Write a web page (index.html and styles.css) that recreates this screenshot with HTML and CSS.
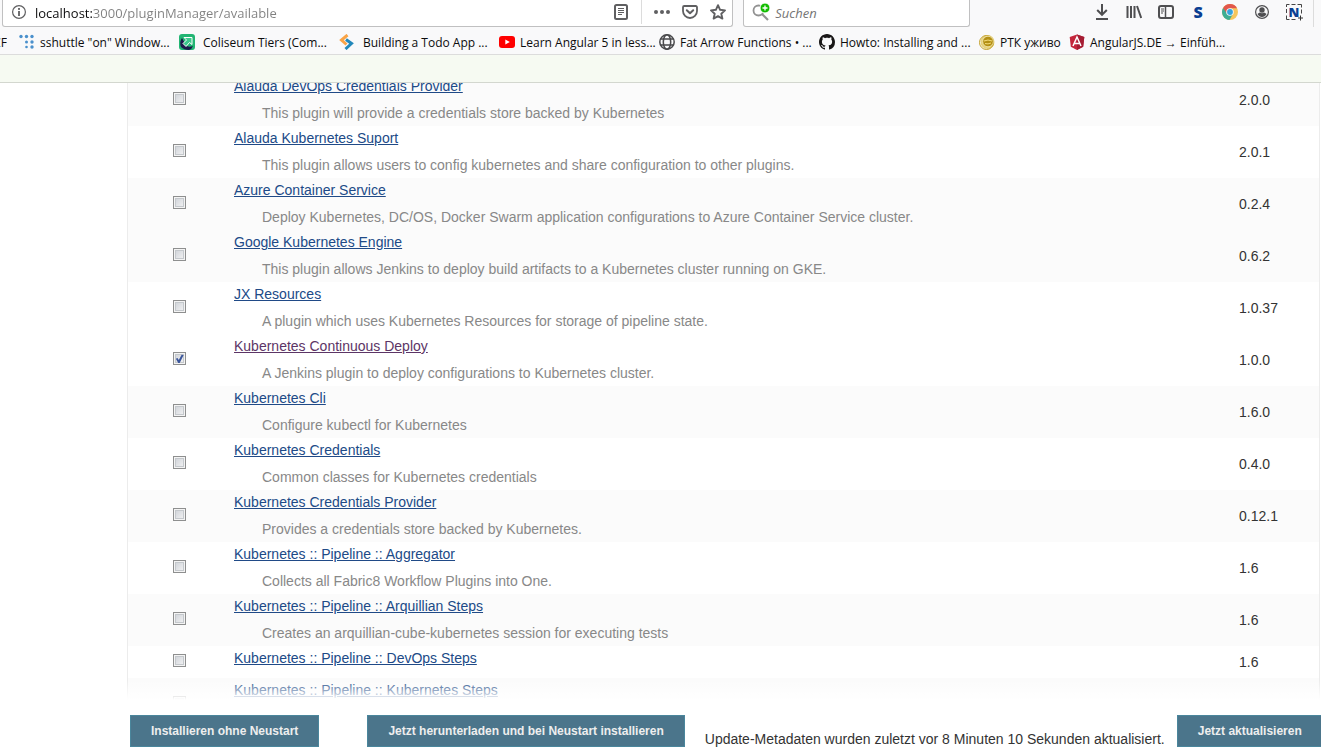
FILE: index.html
```html
<!DOCTYPE html>
<html lang="de">
<head>
<meta charset="utf-8">
<title>Update-Center [Jenkins]</title>
<link rel="stylesheet" href="styles.css">
</head>
<body>
<header class="chrome">
  <div class="toolbar">
    <div class="field url-field">
      <svg class="icon" viewBox="0 0 16 16" aria-hidden="true"><circle cx="8" cy="8" r="6.4" fill="none" stroke="#5f5f61" stroke-width="1.2"/><rect x="7.1" y="7" width="1.8" height="5" fill="#5f5f61"/><rect x="7.1" y="4" width="1.8" height="1.9" fill="#5f5f61"/></svg>
      <input class="url" type="text" aria-label="Adresse" value="localhost:3000/pluginManager/available">
      <button class="tool" aria-label="Leseansicht"><svg class="icon" viewBox="0 0 16 16"><rect x="2" y="1" width="12" height="14" rx="1.5" fill="none" stroke="#5f5f61" stroke-width="2"/><path d="M5 4.5h6M5 6.5h6M5 8.5h6M5 10.5h4" stroke="#5f5f61"/></svg></button>
      <span class="divider"></span>
      <button class="tool" aria-label="Seitenaktionen"><svg class="icon" viewBox="0 0 16 16"><g fill="#5f5f61"><circle cx="2" cy="8" r="2"/><circle cx="8" cy="8" r="2"/><circle cx="14" cy="8" r="2"/></g></svg></button>
      <button class="tool" aria-label="Pocket"><svg class="icon" viewBox="0 0 16 16"><path d="M2.2 2h11.6a1.2 1.2 0 0 1 1.2 1.2V7a7 7 0 0 1-14 0V3.200A1.200 1.200 0 0 1 2.200 2z" fill="none" stroke="#5f5f61" stroke-width="1.800"/><path d="M4.800 6.200 8 9.300l3.200-3.100" fill="none" stroke="#5f5f61" stroke-width="2" stroke-linecap="round" stroke-linejoin="round"/></svg></button>
      <button class="tool" aria-label="Lesezeichen"><svg class="icon" viewBox="0 0 16 16"><path d="M8 1.200 10.100 5.800l4.900.600-3.700 3.300 1.100 4.900L8 12.200l-4.400 2.400 1.100-4.900L1 6.400l4.900-.600z" fill="none" stroke="#5f5f61" stroke-width="1.900" stroke-linejoin="round"/></svg></button>
    </div>
    <div class="field search-field">
      <svg class="search-icon" viewBox="0 0 18 18" aria-hidden="true"><circle cx="6.500" cy="7.500" r="5" fill="none" stroke="#929292" stroke-width="1.800"/><path d="m10 11 6 6" stroke="#929292" stroke-width="2.200"/><circle cx="13" cy="5" r="5" fill="#12bc00" stroke="#fff" stroke-width="1"/><path d="M13 2.500v5M10.500 5h5" stroke="#fff" stroke-width="1.300"/></svg>
      <input class="search" type="search" aria-label="Suchen" placeholder="Suchen">
    </div>
    <nav class="tools" aria-label="Werkzeuge">
      <button class="tool" aria-label="Downloads"><svg class="icon" viewBox="0 0 16 16"><path d="M8 0v10.500M3.200 6 8 10.800 12.800 6M2 15h12" fill="none" stroke="#4f4f51" stroke-width="2"/></svg></button>
      <button class="tool" aria-label="Bibliothek"><svg class="icon" viewBox="0 0 16 16"><path d="M1.500 2v12M5 2v12M8.500 2v12M11 2l4.200 12" fill="none" stroke="#4f4f51" stroke-width="2"/></svg></button>
      <button class="tool" aria-label="Sidebars"><svg class="icon" viewBox="0 0 16 16"><rect x="1" y="2" width="14" height="12" rx="2" fill="none" stroke="#4f4f51" stroke-width="2"/><path d="M7.500 2v12" stroke="#4f4f51" stroke-width="1.500"/><path d="M3 5h3M3 7h3M3 9h2" stroke="#4f4f51"/></svg></button>
      <button class="tool letter-s" aria-label="S">S</button>
      <button class="tool" aria-label="Chrome"><svg class="icon" viewBox="0 0 16 16"><circle cx="8" cy="8" r="8" fill="#f6c65b"/><path d="M8 8 1.100 4A8 8 0 0 0 7.500 16l3.500-6z" fill="#3dae93"/><path d="M1.100 4A8 8 0 0 1 15 4.200H8L5 9.500z" fill="#e2574c"/><circle cx="8" cy="8" r="3.800" fill="#f5f5f5"/><circle cx="8" cy="8" r="2.900" fill="#35a3dd"/></svg></button>
      <button class="tool" aria-label="Konto"><svg class="icon" viewBox="0 0 16 16"><circle cx="8" cy="8" r="6.400" fill="none" stroke="#4f4f51" stroke-width="1.200"/><circle cx="8" cy="6" r="2.700" fill="#4f4f51"/><path d="M3.500 10q2-1.400 2.500-1.400 2 1.500 4 0 1 .2 2.500 1.400-1.500 3-4.500 3t-4.500-3z" fill="#4f4f51"/></svg></button>
      <button class="tool letter-n" aria-label="Nimbus">N<svg class="frame" viewBox="0 0 18 18"><path d="M1.500 4v-2.500h3M6.500 1.500h4M12.500 1.500h4v3M16.500 6.500v4M1.500 6v4M1.500 12.500v4h3M6.500 16.500h4" fill="none" stroke="#444"/><path d="M15.500 12.500v5M13 15h5" stroke="#333" stroke-width="1"/></svg></button>
    </nav>
  </div>
  <nav class="bookmarks" aria-label="Lesezeichen-Symbolleiste">
    <a class="bookmark cut" href="#"><span>CF</span></a>
    <a class="bookmark" href="#"><svg class="icon" viewBox="0 0 16 16"><g fill="#4a90cc"><circle cx="2" cy="2.500" r="1.700"/><circle cx="7.500" cy="2.500" r="1.700"/><circle cx="13" cy="2.500" r="1.700"/><circle cx="7.500" cy="8" r="1.500"/><circle cx="13" cy="8" r="1.700"/><circle cx="7.500" cy="13" r="1.300"/><circle cx="13" cy="13" r="1.700"/></g></svg><span>sshuttle "on" Window...</span></a>
    <a class="bookmark roomy" href="#"><svg class="icon" viewBox="0 0 16 16"><rect width="16" height="16" rx="3" fill="#22b573"/><path d="M3 4Q0 8 2 13q3 3 8 3 3-1 4-4-5 2-7-1T3 4z" fill="#1b1b4b"/><path d="M5 3.500h8v7l-2.500-2-3.500 4-3-3 3.500-3.500z" fill="#3cc98c" stroke="#fff"/></svg><span>Coliseum Tiers (Com...</span></a>
    <a class="bookmark roomy" href="#"><svg class="icon" viewBox="0 0 16 16"><path d="M8.500 1 2.500 6l5 4.500" fill="none" stroke="#f9a447" stroke-width="3"/><path d="m7 5.500 5.500 4L6.500 15" fill="none" stroke="#2288bb" stroke-width="3"/></svg><span>Building a Todo App ...</span></a>
    <a class="bookmark" href="#"><svg class="icon" viewBox="0 0 16 16"><rect y="2" width="16" height="12" rx="3" fill="#f00"/><path d="m6.300 5.500 4.500 2.500-4.500 2.500z" fill="#fff"/></svg><span>Learn Angular 5 in less...</span></a>
    <a class="bookmark" href="#"><svg class="icon" viewBox="0 0 16 16"><g fill="none" stroke="#4a4a4c" stroke-width="1.500"><circle cx="8" cy="8" r="7.200"/><ellipse cx="8" cy="8" rx="3.700" ry="7.200"/><path d="M1.500 5h13M1.500 11h13"/></g></svg><span>Fat Arrow Functions • ...</span></a>
    <a class="bookmark" href="#"><svg class="icon" viewBox="0 0 16 16"><path fill="#191717" d="M8 0C3.580 0 0 3.580 0 8c0 3.540 2.290 6.530 5.470 7.590.4.070.55-.17.55-.38 0-.19-.01-.82-.01-1.490-2.010.37-2.530-.49-2.690-.94-.09-.23-.48-.94-.82-1.130-.28-.15-.68-.52-.01-.53.63-.01 1.080.58 1.230.82.72 1.210 1.870.87 2.330.66.07-.52.28-.87.51-1.070-1.780-.2-3.640-.89-3.640-3.950 0-.87.31-1.590.82-2.150-.08-.2-.36-1.020.08-2.120 0 0 .67-.21 2.200.82.64-.18 1.320-.27 2-.27s1.360.09 2 .27c1.530-1.040 2.200-.82 2.200-.82.44 1.100.16 1.920.08 2.120.51.56.82 1.270.82 2.150 0 3.070-1.870 3.750-3.650 3.950.29.25.54.73.54 1.480 0 1.070-.01 1.930-.01 2.200 0 .21.15.46.55.38A8.010 8.010 0 0 0 16 8c0-4.420-3.580-8-8-8z"/></svg><span>Howto: Installing and ...</span></a>
    <a class="bookmark short" href="#"><svg class="icon" viewBox="0 0 16 16"><circle cx="8.500" cy="8" r="7" fill="#e6d27c"/><circle cx="7.500" cy="8.500" r="7" fill="none" stroke="#c3a02a"/><circle cx="9" cy="7.500" r="5.300" fill="#b38f14" stroke="#f3e7b5" stroke-width=".8"/><path d="M5 7q4-2 8 0M6 9.500q3 1 6-.5" fill="none" stroke="#f3dc7c"/></svg><span>РТК уживо</span></a>
    <a class="bookmark" href="#"><svg class="icon" viewBox="0 0 16 16"><path d="M8 0.500 15.300 3l-1.100 9.700L8 16l-6.200-3.300L.7 3z" fill="#c4263b"/><path d="M8 .5 15.300 3l-1.100 9.700L8 16z" fill="#a51d33"/><path d="M4 12 8 3l4 9M5.600 9.500h4.800" fill="none" stroke="#fff" stroke-width="1.500"/></svg><span>AngularJS.DE → Einfüh...</span></a>
  </nav>
</header>
<div class="page-head"></div>
<main class="list">
  <table class="plugins">
    <colgroup><col class="col-check"><col><col class="col-version"></colgroup>
    <tbody>
      <tr class="shade"><td class="check"><input type="checkbox" id="p1"></td><td class="info"><a href="#">Alauda DevOps Credentials Provider</a><label for="p1">This plugin will provide a credentials store backed by Kubernetes</label></td><td>2.0.0</td></tr>
      <tr><td class="check"><input type="checkbox" id="p2"></td><td class="info"><a href="#">Alauda Kubernetes Suport</a><label for="p2">This plugin allows users to config kubernetes and share configuration to other plugins.</label></td><td>2.0.1</td></tr>
      <tr class="shade"><td class="check"><input type="checkbox" id="p3"></td><td class="info"><a href="#">Azure Container Service</a><label for="p3">Deploy Kubernetes, DC/OS, Docker Swarm application configurations to Azure Container Service cluster.</label></td><td>0.2.4</td></tr>
      <tr class="shade"><td class="check"><input type="checkbox" id="p4"></td><td class="info"><a href="#">Google Kubernetes Engine</a><label for="p4">This plugin allows Jenkins to deploy build artifacts to a Kubernetes cluster running on GKE.</label></td><td>0.6.2</td></tr>
      <tr><td class="check"><input type="checkbox" id="p5"></td><td class="info"><a href="#">JX Resources</a><label for="p5">A plugin which uses Kubernetes Resources for storage of pipeline state.</label></td><td>1.0.37</td></tr>
      <tr><td class="check"><input type="checkbox" id="p6" checked></td><td class="info"><a class="visited" href="#">Kubernetes Continuous Deploy</a><label for="p6">A Jenkins plugin to deploy configurations to Kubernetes cluster.</label></td><td>1.0.0</td></tr>
      <tr class="shade"><td class="check"><input type="checkbox" id="p7"></td><td class="info"><a href="#">Kubernetes Cli</a><label for="p7">Configure kubectl for Kubernetes</label></td><td>1.6.0</td></tr>
      <tr><td class="check"><input type="checkbox" id="p8"></td><td class="info"><a href="#">Kubernetes Credentials</a><label for="p8">Common classes for Kubernetes credentials</label></td><td>0.4.0</td></tr>
      <tr class="shade"><td class="check"><input type="checkbox" id="p9"></td><td class="info"><a href="#">Kubernetes Credentials Provider</a><label for="p9">Provides a credentials store backed by Kubernetes.</label></td><td>0.12.1</td></tr>
      <tr><td class="check"><input type="checkbox" id="p10"></td><td class="info"><a href="#">Kubernetes :: Pipeline :: Aggregator</a><label for="p10">Collects all Fabric8 Workflow Plugins into One.</label></td><td>1.6</td></tr>
      <tr class="shade"><td class="check"><input type="checkbox" id="p11"></td><td class="info"><a href="#">Kubernetes :: Pipeline :: Arquillian Steps</a><label for="p11">Creates an arquillian-cube-kubernetes session for executing tests</label></td><td>1.6</td></tr>
      <tr><td class="check"><input type="checkbox" id="p12" aria-label="Kubernetes :: Pipeline :: DevOps Steps"></td><td class="info"><a href="#">Kubernetes :: Pipeline :: DevOps Steps</a></td><td>1.6</td></tr>
      <tr class="shade"><td class="check"><input type="checkbox" id="p13" aria-label="Kubernetes :: Pipeline :: Kubernetes Steps"></td><td class="info"><a href="#">Kubernetes :: Pipeline :: Kubernetes Steps</a><label for="p13"></label></td><td></td></tr>
    </tbody>
  </table>
</main>
<footer class="actions">
  <button class="action">Installieren ohne Neustart</button>
  <button class="action restart">Jetzt herunterladen und bei Neustart installieren</button>
  <p class="status">Update-Metadaten wurden zuletzt vor 8 Minuten 10 Sekunden aktualisiert.</p>
  <button class="action">Jetzt aktualisieren</button>
</footer>
</body>
</html>
```
FILE: styles.css
```css
* {
  box-sizing: border-box;
}

body {
  margin: 0;
  height: 100vh;
  display: flex;
  flex-direction: column;
  overflow: hidden;
  background: #fff;
  color: #333;
  font: 14px/16px "Liberation Sans", Arial, sans-serif;
}

button,
input {
  font: inherit;
}

/* Browser chrome */
.chrome {
  flex: none;
  background: #f9f9fa;
  border-bottom: 1px solid #dcdcdc;
  font-family: "Open Sans", "Noto Sans", sans-serif;
}

.toolbar {
  display: flex;
  height: 27px;
  padding: 0 7px 0 2px;
}

.field {
  display: flex;
  align-items: center;
  min-width: 0;
  padding-bottom: 2px;
  background: #fff;
  border: 1px solid #c0c0c1;
  border-top: 0;
  border-radius: 0 0 3px 3px;
}

.url-field {
  flex: 736;
  padding-left: 8px;
}

.search-field {
  flex: 221;
  margin-left: 10px;
  padding-left: 8px;
}

.field input {
  flex: 1;
  min-width: 0;
  height: 22px;
  padding: 2px 0 0;
  border: 0;
  outline: 0;
  background: none;
  font-size: 13px;
}

.field .url {
  margin-left: 8px;
  background: linear-gradient(90deg, #0c0c0d 57px, #808080 57px);
  -webkit-background-clip: text;
  background-clip: text;
  color: transparent;
}

.field .search {
  margin-left: 5px;
}

.search::placeholder {
  color: #757575;
  font-style: italic;
}

.icon {
  display: block;
  flex: none;
  width: 16px;
  height: 16px;
}

.search-icon {
  flex: none;
  width: 18px;
  height: 18px;
}

.tool {
  position: relative;
  flex: none;
  display: flex;
  align-items: center;
  justify-content: center;
  width: 28px;
  height: 24px;
  padding: 0;
  border: 0;
  background: none;
}

.divider {
  width: 1px;
  height: 24px;
  margin: 0 6px;
  background: #dcdcdc;
}

.tools {
  flex: 345;
  display: flex;
  justify-content: flex-end;
  gap: 4px;
  padding-right: 5px;
  border-right: 1px solid #dcdcdc;
}

.letter-s,
.letter-n {
  color: #0a3f92;
  font-weight: 800;
  font-size: 16px;
}

.letter-n {
  font-size: 13px;
}

.frame {
  position: absolute;
  inset: 3px 5px;
  width: 18px;
  height: 18px;
}

.bookmarks {
  display: flex;
  align-items: center;
  height: 27px;
  padding-top: 3px;
  overflow: hidden;
  font-size: 12px;
}

.bookmark {
  flex: none;
  display: flex;
  align-items: center;
  gap: 5px;
  width: 160px;
  color: #0c0c0d;
  text-decoration: none;
  white-space: nowrap;
}

.bookmark span {
  padding-top: 2px;
}

.bookmark.roomy {
  gap: 8px;
}

.bookmark.short {
  width: 90px;
}

.bookmark.cut {
  width: 7px;
  margin-right: 12px;
  justify-content: flex-end;
  overflow: hidden;
}

/* Page */
.page-head {
  flex: none;
  height: 28px;
  background: #f6faf2;
  border-bottom: 1px solid #d3d7cf;
}

.list {
  flex: 1;
  min-height: 0;
  overflow: hidden;
  padding: 0 1px 0 127px;
}

.plugins {
  width: 100%;
  margin-top: -9px;
  table-layout: fixed;
  border-collapse: separate;
  border-spacing: 0;
  border: 1px solid #ececec;
  border-width: 0 1px;
}

.col-check {
  width: 103px;
}

.col-version {
  width: 83px;
}

.plugins tr {
  height: 32px;
}

.shade {
  background: #fbfbfb;
}

.plugins td {
  padding: 0 3px;
  vertical-align: middle;
}

.plugins .check {
  padding-bottom: 5px;
  text-align: center;
}

.plugins .info {
  padding: 4px 3px;
  vertical-align: top;
}

.info a {
  color: #204a87;
}

.info a.visited {
  color: #5c3566;
}

.info label {
  display: block;
  min-height: 18px;
  margin: 10px 0 0 28px;
  color: #888;
  line-height: 18px;
}

.check input {
  display: inline-block;
  position: relative;
  width: 13px;
  height: 13px;
  margin: 0;
  vertical-align: middle;
  appearance: none;
  border: 1px solid #8e8f8f;
  background: linear-gradient(135deg, #cbcfd5, #f6f6f6);
  box-shadow: inset 0 0 0 1px #f4f4f4, inset 0 0 0 2px #c4c8cc;
}

.check input:checked::after {
  content: "";
  position: absolute;
  inset: 1px;
  background: #3a559b;
  clip-path: polygon(10% 50%, 28% 42%, 42% 62%, 74% 4%, 96% 8%, 52% 96%, 36% 96%);
}

/* Sticky button bar */
.actions {
  position: relative;
  flex: none;
  display: flex;
  align-items: flex-end;
  height: 56px;
  padding: 0 0 9px 130px;
  background: #fff;
  white-space: nowrap;
}

.actions::before {
  content: "";
  position: absolute;
  left: 0;
  right: 0;
  bottom: 100%;
  height: 20px;
  background: linear-gradient(rgba(255, 255, 255, 0), #fff);
}

.action {
  flex: none;
  height: 32px;
  padding: 0 20px;
  border: 1px solid #4a869c;
  background: #4b758b;
  color: #eee;
  font-weight: 700;
  font-size: 12px;
}

.restart {
  margin-left: 48px;
}

.status {
  margin: 0 12px 0 20px;
}
```
